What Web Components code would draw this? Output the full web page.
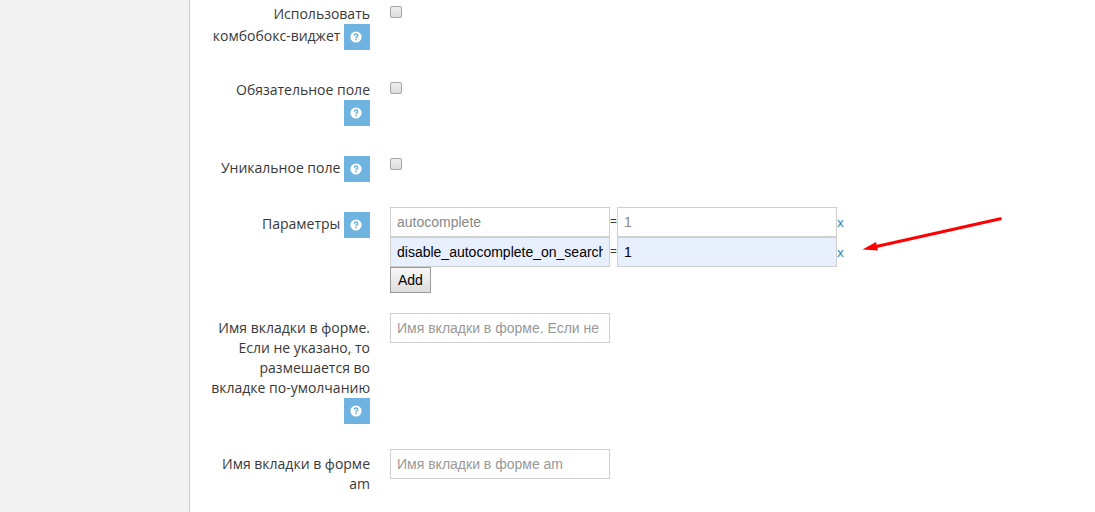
<!DOCTYPE html>
<html lang="ru">
<head>
<meta charset="utf-8">
<title>Настройки поля</title>
<style>
body { margin: 0; background: #fff; color: #393939; font: 400 14px/20px "Open Sans", sans-serif; }
</style>
</head>
<body>
<admin-shell>
  <checkbox-field help>Использовать комбобокс-виджет</checkbox-field>
  <checkbox-field help>Обязательное поле</checkbox-field>
  <checkbox-field help>Уникальное поле</checkbox-field>
  <params-field help>Параметры</params-field>
  <text-field help placeholder="Имя вкладки в форме. Если не указано, то размешается во вкладке по-умолчанию">Имя вкладки в форме. Если не указано, то размешается во вкладке по-умолчанию</text-field>
  <text-field placeholder="Имя вкладки в форме am">Имя вкладки в форме am</text-field>
</admin-shell>

<script>
class AdminShell extends HTMLElement {
  constructor() {
    super();
    this.attachShadow({ mode: "open" }).innerHTML = `
      <style>
        :host { display: grid; grid-template-columns: 190px minmax(0, 1fr); min-height: 100vh; }
        aside { background: #f2f2f2; border-right: 1px solid #ccc; }
        main { display: flex; flex-direction: column; gap: 20px; margin-top: -1px; padding: 0 20px; }
      </style>
      <aside></aside>
      <main><slot></slot></main>`;
  }
}
customElements.define("admin-shell", AdminShell);

class HelpBadge extends HTMLElement {
  constructor() {
    super();
    this.attachShadow({ mode: "open" }).innerHTML = `
      <style>
        :host { display: inline-block; vertical-align: middle; }
        button { display: grid; place-items: center; width: 26px; height: 26px; margin: 0; padding: 0 2px 0 0; border: 0; background: #6fb3e0; cursor: help; }
        svg { display: block; }
      </style>
      <button type="button" aria-label="Справка">
        <svg width="12" height="12" viewBox="0 0 12 12" aria-hidden="true">
          <circle cx="6" cy="6" r="5.6" fill="#fff"/>
          <path d="M4.3 4.7C4.4 3.5 5.1 3 6 3c1 0 1.7.6 1.7 1.4C7.7 5.6 6.1 5.5 6.1 6.9" fill="none" stroke="#6fb3e0" stroke-width="1.6"/>
          <rect x="5.2" y="7.7" width="1.7" height="1.6" fill="#6fb3e0"/>
        </svg>
      </button>`;
  }
}
customElements.define("help-badge", HelpBadge);

class FormField extends HTMLElement {
  constructor() {
    super();
    this.attachShadow({ mode: "open" }).innerHTML = `
      <style>
        :host { display: grid; grid-template-columns: 160px minmax(0, 1fr); column-gap: 20px; align-items: start; }
        .caption { padding: 5px 0; text-align: right; }
        input[type=text] { box-sizing: border-box; width: 220px; height: 30px; margin: 0; padding: 4px 6px; border: 1px solid #d0d0d0; border-radius: 0; background: #fff; color: #888; font: 400 14px/20px "Liberation Sans", Arial, sans-serif; }
        input::placeholder { color: #999; opacity: 1; }
        input[type=checkbox] { appearance: none; display: block; box-sizing: border-box; width: 12px; height: 12px; margin: 7px 0 0; border: 1px solid #a6a6a6; border-radius: 2px; background: linear-gradient(#eee, #dcdcdc); }
        ${this.styles}
      </style>
      <div class="caption"><label for="control"><slot></slot></label>${this.hasAttribute("help") ? " <help-badge></help-badge>" : ""}</div>
      <div class="controls">${this.control}</div>`;
  }
  get styles() { return ""; }
}

class CheckboxField extends FormField {
  get control() { return `<input id="control" type="checkbox">`; }
}
customElements.define("checkbox-field", CheckboxField);

class TextField extends FormField {
  get styles() { return `input[type=text] { display: block; }`; }
  get control() { return `<input id="control" type="text" placeholder="${this.getAttribute("placeholder")}">`; }
}
customElements.define("text-field", TextField);

class ParamsField extends FormField {
  get styles() {
    return `
      .controls { position: relative; }
      .pair { display: flex; align-items: center; font-size: 13px; }
      .pair span { width: 7px; text-align: center; font-size: 12px; }
      .pair a { color: #1a7fc1; text-decoration: none; }
      .pair.filled input { background: #e8f0fe; color: #000; }
      .add { display: block; height: 26px; margin: 0; padding: 0 7px; border: 1px solid #999; border-radius: 0; background: linear-gradient(#f8f8f8, #ddd); color: #000; font: 400 14px/20px "Liberation Sans", Arial, sans-serif; }
      .pointer { position: absolute; left: 470px; top: 8px; pointer-events: none; }`;
  }
  get control() {
    return `
      <div class="pair">
        <input id="control" type="text" value="autocomplete"><span>=</span><input type="text" value="1" aria-label="Значение autocomplete"><a href="#">x</a>
      </div>
      <div class="pair filled">
        <input type="text" value="disable_autocomplete_on_search" aria-label="Параметр"><span>=</span><input type="text" value="1" aria-label="Значение параметра"><a href="#">x</a>
      </div>
      <button class="add" type="button">Add</button>
      <svg class="pointer" width="146" height="40" viewBox="0 0 146 40" aria-hidden="true">
        <path d="M141.500 3.500L14 32" fill="none" stroke="#f00" stroke-width="3"/>
        <path d="M2.500 34.500L16 27L18 35.500Z" fill="#f00"/>
      </svg>`;
  }
}
customElements.define("params-field", ParamsField);
</script>
</body>
</html>
